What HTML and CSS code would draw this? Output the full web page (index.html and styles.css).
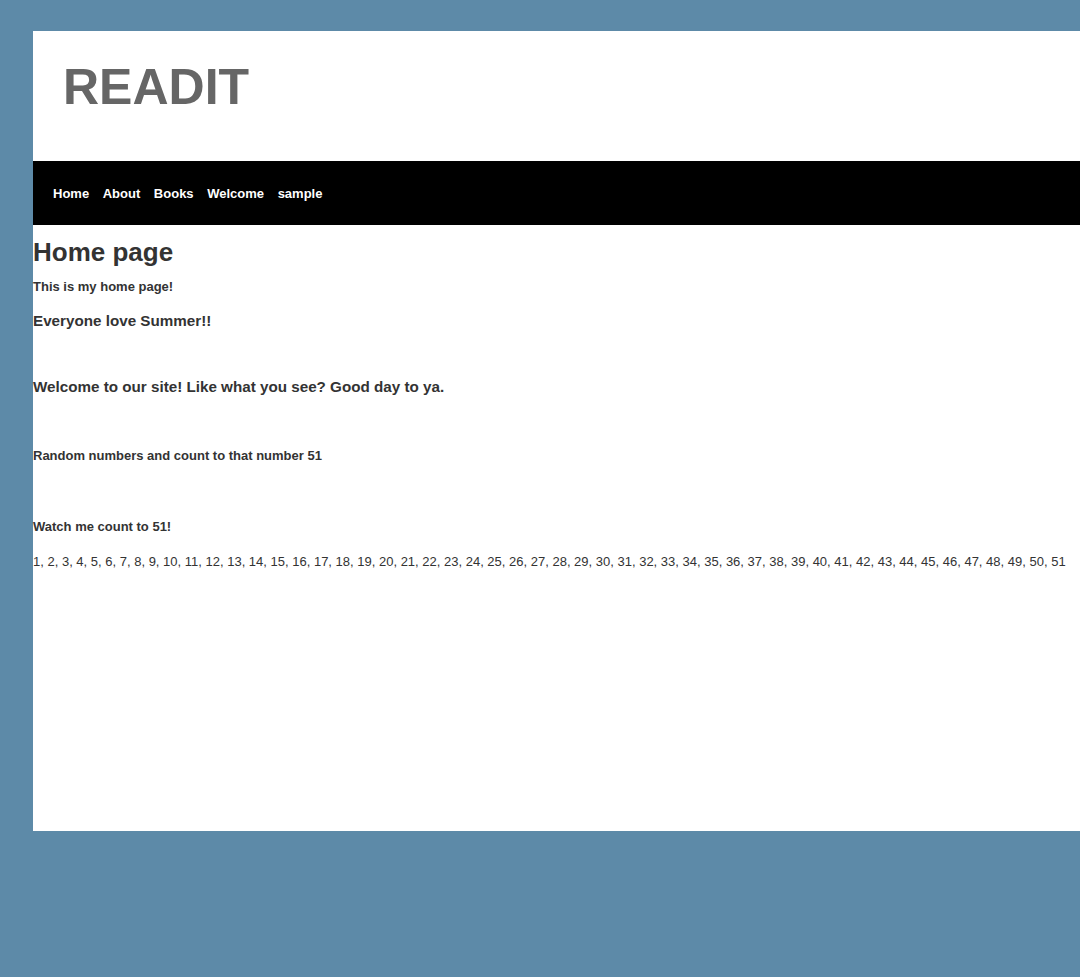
FILE: index.html
```html
<!DOCTYPE html>
<html>
<head>
<meta charset="utf-8">
<title>READIT</title>
<link rel="stylesheet" href="styles.css">
</head>
<body>
<div class="wrapper">
  <div class="page">
    <header class="header">
      <h1 class="logo">READIT</h1>
    </header>
    <nav class="nav">
      <a class="nav-link" href="#">Home</a>
      <a class="nav-link" href="#">About</a>
      <a class="nav-link" href="#">Books</a>
      <a class="nav-link" href="#">Welcome</a>
      <a class="nav-link" href="#">sample</a>
    </nav>
    <main class="content">
      <h2 class="title">Home page</h2>
      <p class="small-bold intro">This is my home page!</p>
      <h3 class="medium summer">Everyone love Summer!!</h3>
      <h3 class="medium welcome">Welcome to our site! Like what you see? Good day to ya.</h3>
      <p class="small-bold random">Random numbers and count to that number 51</p>
      <p class="small-bold watch">Watch me count to 51!</p>
      <p class="numbers">1, 2, 3, 4, 5, 6, 7, 8, 9, 10, 11, 12, 13, 14, 15, 16, 17, 18, 19, 20, 21, 22, 23, 24, 25, 26, 27, 28, 29, 30, 31, 32, 33, 34, 35, 36, 37, 38, 39, 40, 41, 42, 43, 44, 45, 46, 47, 48, 49, 50, 51</p>
    </main>
  </div>
</div>
</body>
</html>
```

FILE: styles.css
```css
html, body {
  margin: 0;
  padding: 0;
  background: #5d8aa8;
}

body {
  font-family: "Liberation Sans", Arial, sans-serif;
  color: #333333;
}

.wrapper {
  padding: 31px 0 0 33px;
  width: 1050px;
}

.page {
  background: #ffffff;
  width: 1050px;
  height: 800px;
}

.header {
  height: 130px;
  padding-left: 30px;
  box-sizing: border-box;
}

.logo {
  margin: 0;
  padding-top: 27px;
  font-size: 50px;
  line-height: 58px;
  font-weight: bold;
  color: #666666;
}

.nav {
  background: #000000;
  height: 64px;
  display: flex;
  align-items: center;
  gap: 13.6px;
  padding-left: 20px;
}

.nav-link {
  color: #ffffff;
  text-decoration: none;
  font-size: 13px;
  font-weight: bold;
  line-height: 15px;
  padding-top: 1px;
}

.content {
  padding-top: 12px;
}

.content h2,
.content h3,
.content p {
  margin: 0;
}

.title {
  font-size: 26px;
  line-height: 30px;
  font-weight: bold;
}

.small-bold {
  font-size: 13px;
  line-height: 15px;
  font-weight: bold;
}

.medium {
  font-size: 15.21px;
  line-height: 17px;
  font-weight: bold;
}

.intro { margin-top: 12px !important; }
.summer { margin-top: 18px !important; }
.welcome { margin-top: 49px !important; }
.random { margin-top: 53px !important; }
.watch { margin-top: 56px !important; }

.numbers {
  margin-top: 20px !important;
  font-size: 13px;
  line-height: 15px;
  white-space: nowrap;
}
```
